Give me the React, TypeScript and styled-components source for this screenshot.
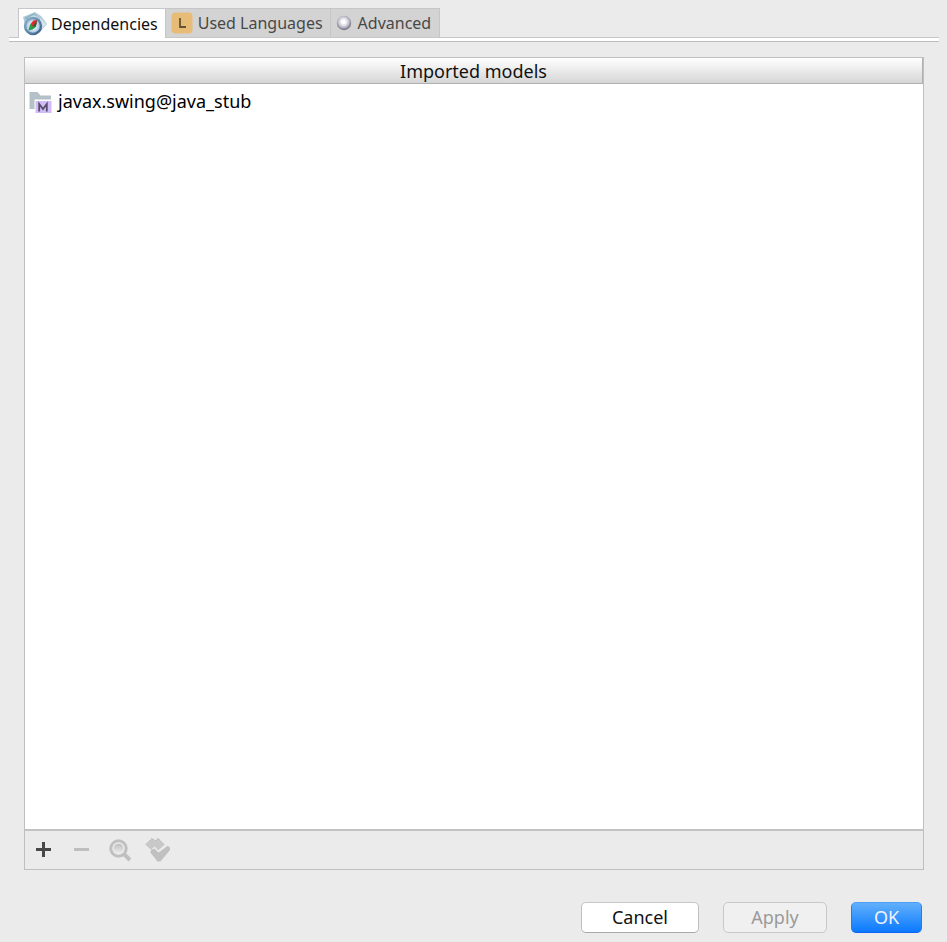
import React, { useState } from "react";
import styled, { createGlobalStyle } from "styled-components";

const GlobalStyle = createGlobalStyle`
  *, *::before, *::after { box-sizing: border-box; }
  body {
    margin: 0;
    background: #ebebeb;
    color: #000;
    font-family: "Noto Sans", "Open Sans", sans-serif;
    font-size: 18px;
    line-height: 24px;
  }
  button { font: inherit; color: inherit; }
`;

const Dialog = styled.main`
  display: flex;
  flex-direction: column;
  min-height: 100vh;
  padding: 8px 8px 9px 9px;
`;

const TabList = styled.div`
  display: flex;
  align-items: flex-start;
  height: 29px;
  padding-left: 9px;
`;

const Tab = styled.button<{ $active: boolean; $gap: number }>`
  display: flex;
  align-items: center;
  gap: ${(p) => p.$gap}px;
  height: ${(p) => (p.$active ? "30px" : "29px")};
  padding: 0 7px 0 5px;
  border: 1px solid #c6c6c6;
  border-bottom: 0;
  border-right-width: 0;
  background: ${(p) => (p.$active ? "#fff" : "#d3d3d3")};
  color: ${(p) => (p.$active ? "#111" : "#484848")};
  font-size: 16px;
  white-space: nowrap;
  z-index: ${(p) => (p.$active ? 1 : 0)};
  &:first-child { padding-left: 4px; }
  &:last-child { padding-right: 8px; border-right-width: 1px; }
`;

const TabStrip = styled.div`
  height: 5px;
  border-top: 1px solid #c6c6c6;
  border-bottom: 1px solid #bdbdbd;
  background: #fff;
`;

const Panel = styled.section`
  flex: 1;
  display: flex;
  flex-direction: column;
  margin: 15px 15px 0;
  border: 1px solid #bfbfbf;
`;

const TableArea = styled.div`
  flex: 1;
  background: #fff;
`;

const ModelTable = styled.table`
  width: 100%;
  border-collapse: separate;
  border-spacing: 0;
`;

const HeaderCell = styled.th`
  height: 26px;
  padding: 0;
  border-right: 1px solid #b0b0b0;
  border-bottom: 1px solid #b0b0b0;
  background: linear-gradient(#fff, #d6d6d6);
  font-weight: 400;
  color: #111;
`;

const ModelCell = styled.td`
  padding: 5px 4px;
`;

const ModelName = styled.div`
  display: flex;
  align-items: center;
  gap: 5px;
`;

const Toolbar = styled.div`
  display: flex;
  align-items: center;
  gap: 14px;
  height: 40px;
  padding-left: 6px;
  border-top: 2px solid #c2c2c2;
`;

const ToolButton = styled.button`
  display: flex;
  width: 24px;
  height: 24px;
  padding: 0;
  border: 0;
  background: transparent;
`;

const Footer = styled.footer`
  display: flex;
  justify-content: flex-end;
  gap: 24px;
  padding: 32px 17px 0 0;
`;

const DialogButton = styled.button<{ $width: number; $primary?: boolean }>`
  width: ${(p) => p.$width}px;
  height: 31px;
  padding: 0 0 2px;
  border: 1px solid;
  border-color: ${(p) => (p.$primary ? "#4b9ffb #1f7dfa #0d63f5" : "#c8c8c8 #bebebe #a9a9a9")};
  border-radius: 5px;
  background: ${(p) => (p.$primary ? "linear-gradient(#62b0fb, #0a79ff)" : "#fff")};
  color: ${(p) => (p.$primary ? "#f0f3ff" : "#111")};
  &:disabled {
    border-color: #c8c8c8;
    background: #f0f0f0;
    color: #9a9a9a;
  }
`;

const CompassIcon = () => (
  <svg width="24" height="24" viewBox="0 0 24 24" aria-hidden="true">
    <defs>
      <linearGradient id="rim" x1="0" y1="0" x2="1" y2="1">
        <stop offset="0" stopColor="#8fb0c8" />
        <stop offset="1" stopColor="#3c5f8c" />
      </linearGradient>
      <radialGradient id="dial">
        <stop offset="0.2" stopColor="#ffffff" />
        <stop offset="1" stopColor="#8fb6dc" />
      </radialGradient>
    </defs>
    <path d="M0 5 12 0 18 4 24 12 17 20 3 17Z" fill="#b0cad8" />
    <path d="m1 6 10-5 3 3-9 4z" fill="#8fb5c8" />
    <path d="M17 6l6 6-5 6z" fill="#d4e5ed" />
    <path d="m5 6 6-3 4 3-7 2z" fill="#c9dfe9" />
    <circle cx="10" cy="14" r="8" fill="url(#dial)" stroke="url(#rim)" strokeWidth="2.4" />
    <path d="m5.5 18.500 1.500-6 3-1 2.500 4-3 2z" fill="#23a04c" />
    <path d="m7.500 12 3-3.500 3.500-.5-.5 4-3.500 3z" fill="#e42a2a" />
    <path d="m14 8-1 7-3-1z" fill="#2c5c3c" />
  </svg>
);

const LanguageIcon = () => (
  <svg width="22" height="22" viewBox="0 0 22 22" aria-hidden="true">
    <rect x="0.5" y="0.5" width="21" height="21" rx="4" fill="#e7bc76" />
    <path d="M9 6v9h6" fill="none" stroke="#665334" strokeWidth="1.8" />
  </svg>
);

const SphereIcon = () => (
  <svg width="16" height="16" viewBox="0 0 16 16" aria-hidden="true">
    <defs>
      <radialGradient id="sphere" cx="0.47" cy="0.42" r="0.57">
        <stop offset="0.2" stopColor="#fff" />
        <stop offset="0.6" stopColor="#c9c9d4" />
        <stop offset="1" stopColor="#6f6c80" />
      </radialGradient>
    </defs>
    <circle cx="8" cy="8" r="7.2" fill="url(#sphere)" />
  </svg>
);

const ModelIcon = () => (
  <svg width="24" height="24" viewBox="0 0 24 24" aria-hidden="true">
    <path d="M.5 3h8l3 3.500H22v4H5.500V20h-5z" fill="#b5c1c8" />
    <rect x="6.500" y="12" width="16" height="12" fill="#d1bcf7" />
    <path
      d="M10.200 22.500v-7.500l3.800 5 3.800-5v7.500"
      fill="none"
      stroke="#574c6a"
      strokeWidth="1.800"
      strokeLinejoin="miter"
    />
  </svg>
);

const AddIcon = () => (
  <svg width="24" height="24" viewBox="0 0 24 24" aria-hidden="true">
    <path d="M5 11.5h15M12.5 4v15" stroke="#484848" strokeWidth="3" />
  </svg>
);

const RemoveIcon = () => (
  <svg width="24" height="24" viewBox="0 0 24 24" aria-hidden="true">
    <path d="M5 11.5h15" stroke="#bfbfbf" strokeWidth="3" />
  </svg>
);

const SearchIcon = () => (
  <svg width="24" height="24" viewBox="0 0 24 24" aria-hidden="true">
    <defs>
      <linearGradient id="lens" x1="0" y1="0" x2="0" y2="1">
        <stop offset="0" stopColor="#bfbfbf" />
        <stop offset="1" stopColor="#ebebeb" />
      </linearGradient>
    </defs>
    <circle cx="11.500" cy="10.500" r="7.700" fill="#ebebeb" stroke="#c0c0c0" strokeWidth="3" />
    <circle cx="11.500" cy="10.500" r="4.800" fill="url(#lens)" />
    <path d="m17 16 6 6" stroke="#c0c0c0" strokeWidth="4" />
  </svg>
);

const CheckUsageIcon = () => (
  <svg width="25" height="24" viewBox="0 0 25 24" aria-hidden="true" overflow="visible">
    <path
      d="M.8 6.500 7 .3l3.200 2.500L13 .3l6.200 6.200L13 12l-2.800-1L7 12z"
      fill="#c8c8c8"
      stroke="#b8b8b8"
      strokeDasharray="1.500 1"
    />
    <path d="M5 14 8.500 10l5 4L22 7.500l3 2V12L15.500 23.500h-3z" fill="#c0c0c0" />
    <path d="m7.500 11 2-1.500 4.300 4L22 7.500" fill="none" stroke="#ebebeb" strokeWidth="1.500" />
  </svg>
);

const tabs = [
  { label: "Dependencies", icon: <CompassIcon />, gap: 4 },
  { label: "Used Languages", icon: <LanguageIcon />, gap: 5 },
  { label: "Advanced", icon: <SphereIcon />, gap: 6 },
];

const tools = [
  { label: "Add", icon: <AddIcon />, disabled: false },
  { label: "Remove", icon: <RemoveIcon />, disabled: true },
  { label: "Find usages", icon: <SearchIcon />, disabled: true },
  { label: "Remove unused", icon: <CheckUsageIcon />, disabled: true },
];

export default function App() {
  const [active, setActive] = useState(0);
  return (
    <Dialog>
      <GlobalStyle />
      <TabList role="tablist">
        {tabs.map((tab, i) => (
          <Tab
            key={tab.label}
            type="button"
            role="tab"
            aria-selected={i === active}
            $active={i === active}
            $gap={tab.gap}
            onClick={() => setActive(i)}
          >
            {tab.icon}
            {tab.label}
          </Tab>
        ))}
      </TabList>
      <TabStrip />
      <Panel>
        <TableArea>
          <ModelTable>
            <thead>
              <tr>
                <HeaderCell scope="col">Imported models</HeaderCell>
              </tr>
            </thead>
            <tbody>
              <tr>
                <ModelCell>
                  <ModelName>
                    <ModelIcon />
                    javax.swing@java_stub
                  </ModelName>
                </ModelCell>
              </tr>
            </tbody>
          </ModelTable>
        </TableArea>
        <Toolbar role="toolbar">
          {tools.map((tool) => (
            <ToolButton key={tool.label} type="button" aria-label={tool.label} disabled={tool.disabled}>
              {tool.icon}
            </ToolButton>
          ))}
        </Toolbar>
      </Panel>
      <Footer>
        <DialogButton type="button" $width={118}>Cancel</DialogButton>
        <DialogButton type="button" $width={104} disabled>Apply</DialogButton>
        <DialogButton type="button" $width={71} $primary>OK</DialogButton>
      </Footer>
    </Dialog>
  );
}
